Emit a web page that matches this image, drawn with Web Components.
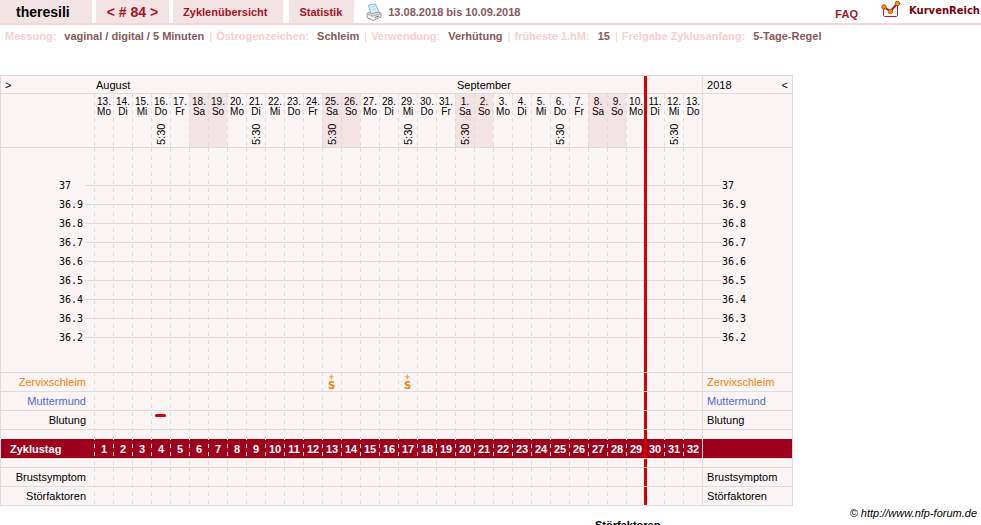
<!DOCTYPE html>
<html lang="de">
<head>
<meta charset="utf-8">
<title>theresili - Zyklus 84</title>
<style>
  html {
    overflow: hidden;
  }
  body {
    margin: 0;
    background: #fff;
    color: #000;
    font: 11px/14px "Liberation Sans", Arial, sans-serif;
  }
</style>
</head>
<body>
<nfp-header>
  <nfp-tab big>theresili</nfp-tab>
  <nfp-tab big href="#84">&lt; # 84 &gt;</nfp-tab>
  <nfp-tab href="#zyklen">Zyklenübersicht</nfp-tab>
  <nfp-tab href="#statistik">Statistik</nfp-tab>
  <span slot="range">13.08.2018 bis 10.09.2018</span>
</nfp-header>
<profile-bar>
  <profile-item label="Messung:">vaginal / digital / 5 Minuten</profile-item>
  <profile-item label="Östrogenzeichen:">Schleim</profile-item>
  <profile-item label="Verwendung:">Verhütung</profile-item>
  <profile-item label="früheste 1.hM:">15</profile-item>
  <profile-item label="Freigabe Zyklusanfang:">5-Tage-Regel</profile-item>
</profile-bar>
<cycle-chart start="2018-08-13" days="32" current="29" measured="4,9,13,17,20,25,31" mucus="13,17" bleeding="4"></cycle-chart>
<nfp-footer>
  <span slot="copyright">© http://www.nfp-forum.de</span>
  Störfaktoren
</nfp-footer>

<script>
class NfpHeader extends HTMLElement {
  constructor() {
    super()
    this.attachShadow({ mode: 'open' }).innerHTML = `
      <style>
        :host {
          display: block;
          border-bottom: 2px solid #f3d7da;
        }
        header, nav, .range, .brand {
          display: flex;
        }
        nav {
          gap: 4px;
        }
        .range {
          align-items: center;
          gap: 6px;
          padding-left: 12px;
          color: #85595b;
          font-weight: bold;
        }
        .right {
          display: flex;
          gap: 22px;
          margin-left: auto;
          padding-right: 1px;
        }
        a {
          color: #9c1828;
          font-weight: bold;
          text-decoration: none;
        }
        .faq {
          padding-top: 7px;
        }
        .brand {
          gap: 7px;
          color: #800010;
          font: bold 10px/14px "DejaVu Sans", Verdana, sans-serif;
        }
        .brand span {
          padding-top: 4px;
        }
      </style>
      <header>
        <nav><slot></slot></nav>
        <div class="range">
          <svg width="16" height="18" viewBox="0 0 16 18" aria-hidden="true">
            <path d="M2.500 2l7-1 3.500 8-8 2z" fill="#dcf0fd" stroke="#8db6d6"/>
            <path d="M5 4l4.500-.8M6 6.500l4.500-.8" stroke="#a5d0ec"/>
            <path d="M1 10.500l3-1.500 1 2 7-2 3 1v4l-8 3.500-6-3z" fill="#e2e4e6" stroke="#999da3"/>
            <path d="M1.500 11l5.500 2 7.500-2.500" fill="none" stroke="#a9adb2"/>
            <path d="M2 13.500l5 2 7-3" fill="none" stroke="#fff"/>
            <path d="M9 14.500l4-1.500" stroke="#6b7076"/>
          </svg>
          <slot name="range"></slot>
        </div>
        <div class="right">
          <a class="faq" href="#faq">FAQ</a>
          <a class="brand" href="#start">
            <svg width="22" height="22" viewBox="0 0 22 22" aria-hidden="true">
              <path d="M0 12.500h22M8.500 3v16M15.500 3v16" stroke="#f0f0f0" fill="none"/>
              <path d="M3.500 8v7.500l1 1h12l1-1V4" fill="none" stroke="#b01850"/>
              <path d="M4 7l6.500 4.500L17.500 3" fill="none" stroke="#a01848" stroke-width="2"/>
              <g fill="#ff9200" stroke="#c04a14">
                <circle cx="4" cy="7" r="2.200"/>
                <circle cx="10.500" cy="11.500" r="2.200"/>
                <circle cx="17.500" cy="3.500" r="2.200"/>
              </g>
            </svg>
            <span>KurvenReich</span>
          </a>
        </div>
      </header>
    `
  }
}

class NfpTab extends HTMLElement {
  connectedCallback() {
    if (this.shadowRoot) return
    const href = this.getAttribute('href')
    this.attachShadow({ mode: 'open' }).innerHTML = `
      <style>
        :host {
          display: block;
          padding: 0 12px 0 10px;
          background: #f4e3e5;
          font-weight: bold;
          line-height: 23px;
          white-space: nowrap;
        }
        :host(:not([big])) {
          padding-right: 16px;
        }
        :host(:last-of-type) {
          margin-left: 2px;
          padding-right: 12px;
        }
        :host([big]) {
          padding: 1px 11px 0;
          font-size: 14px;
          line-height: 22px;
        }
        :host([big]:not([href])) {
          padding: 1px 22px 0 16px;
        }
        a {
          display: block;
          margin-top: 1px;
          color: #a51324;
          line-height: 22px;
          text-decoration: none;
        }
        :host([big]) a {
          margin: 0;
        }
      </style>
      ${href ? `<a href="${href}"><slot></slot></a>` : '<slot></slot>'}
    `
  }
}

class ProfileBar extends HTMLElement {
  constructor() {
    super()
    this.attachShadow({ mode: 'open' }).innerHTML = `
      <style>
        :host {
          display: flex;
          gap: 4px;
          padding: 4px 5px;
          white-space: nowrap;
        }
      </style>
      <slot></slot>
    `
  }
}

class ProfileItem extends HTMLElement {
  connectedCallback() {
    if (this.shadowRoot) return
    this.attachShadow({ mode: 'open' }).innerHTML = `
      <style>
        :host {
          display: flex;
          color: #85595b;
          font-weight: bold;
        }
        .label {
          margin-right: 8px;
          color: #f5cfd1;
        }
        :host(:not(:last-child))::after {
          content: "|";
          margin-left: 5px;
          color: #f5cfd1;
          font-weight: normal;
        }
      </style>
      <span class="label">${this.getAttribute('label')}</span><slot></slot>
    `
  }
}

const chartStyle = `
  <style>
  :host {
    display: block;
    margin-top: 28px;
    --line: #dcdcdc;
    --marker: #d90000;
    --band: #9e001c;
    --weekend: #f4e3e5;
  }
  table {
    table-layout: fixed;
    width: 793px;
    border: solid var(--line);
    border-width: 1px 1px 0;
    border-spacing: 0;
    background: #faf4f4;
  }
  .label { width: 93px; }
  .day { width: 19px; }
  tr { height: 19px; }
  th, td {
    box-sizing: border-box;
    height: inherit;
    padding: 0;
    border-bottom: 1px solid var(--line);
    font-weight: normal;
    line-height: 14px;
    white-space: nowrap;
  }
  th { text-align: left; }
  td { text-align: center; }
  tbody th:first-child {
    padding-right: 8px;
    text-align: right;
  }
  th:last-child {
    padding-left: 4px;
    border-left: 1px solid var(--line);
  }

  /* dashed day separators: 4px on, 4px off */
  td, .date {
    --dash: var(--line);
    background-image: conic-gradient(from 270deg at 1px 4px, var(--dash) 90deg, transparent 0);
    background-size: 19px 8px;
    background-position: 0 var(--phase, 0);
  }

  .months { height: 18px; }
  .months .month { padding-left: 2px; }
  .months .ends { padding: 0 4px; }
  .ends div {
    display: flex;
    justify-content: space-between;
  }
  .dates { height: 54px; }
  .date {
    padding: 3px 0 0 1px;
    font-size: 10px;
    line-height: 10px;
    text-align: center;
    vertical-align: top;
  }
  .weekend { background-color: var(--weekend); }
  time {
    display: block;
    width: 14px;
    height: 22px;
    margin: 6px auto 0;
    font-size: 11px;
    line-height: 14px;
    writing-mode: vertical-rl;
    transform: rotate(180deg);
  }

  .space th, .space td, .temp th, .temp td { border-bottom: 0; }
  .top { height: 28px; }
  .bottom { height: 26px; }
  .bottom th, .bottom td { border-bottom: 1px solid var(--line); }
  .gap { height: 9px; }
  .rule { height: 10px; }
  .rule th, .rule td {
    border-top: 1px solid var(--line);
    border-bottom: 1px solid var(--line);
  }
  .temp th {
    font: 10px/19px "DejaVu Sans Mono", monospace;
    background: linear-gradient(var(--line), var(--line)) no-repeat 84px 9px / 9px 1px;
  }
  .temp th:first-child {
    padding-left: 58px;
    text-align: left;
  }
  .temp th:last-child {
    padding-left: 19px;
    background-position: 0 9px;
    background-size: 18px 1px;
  }
  .temp td {
    background-image:
      linear-gradient(var(--line), var(--line)),
      conic-gradient(from 270deg at 1px 4px, var(--dash) 90deg, transparent 0);
    background-repeat: no-repeat, repeat;
    background-size: 100% 1px, 19px 8px;
    background-position: 0 9px, 0 var(--phase);
  }
  .band th, .band td {
    --dash: #eee;
    border-bottom: 0;
    background-color: var(--band);
    color: #fff;
    font-weight: bold;
  }
  .band td { padding-left: 1px; }
  .band th:first-child {
    padding-left: 9px;
    text-align: left;
  }

  /* end of the recorded cycle */
  .now { position: relative; }
  .now::before {
    content: "";
    position: absolute;
    top: 0;
    bottom: 0;
    left: -1px;
    width: 3px;
    background: var(--marker);
  }
  thead .now::before { bottom: -1px; }

  .mucus { color: #f58200; }
  .opening { color: #5468cc; }
  .sign {
    display: block;
    font: bold 10px/10px "DejaVu Sans", Verdana, sans-serif;
  }
  .sign sup {
    display: block;
    font: bold 7px/7px "DejaVu Sans", Verdana, sans-serif;
  }
  .blood {
    display: block;
    width: 11px;
    height: 3px;
    margin: 0 auto 9px 4px;
    border-radius: 2px;
    background: var(--marker);
  }
  </style>
`

const weekdays = ['So', 'Mo', 'Di', 'Mi', 'Do', 'Fr', 'Sa']
const monthNames = ['Januar', 'Februar', 'März', 'April', 'Mai', 'Juni', 'Juli', 'August', 'September', 'Oktober', 'November', 'Dezember']

class CycleChart extends HTMLElement {
  connectedCallback() {
    if (!this.shadowRoot) this.attachShadow({ mode: 'open' })
    this.count = Number(this.getAttribute('days'))
    this.current = Number(this.getAttribute('current'))
    this.render()
  }

  list(name) {
    return (this.getAttribute(name) || '').split(',').map(Number)
  }

  dates() {
    const [year, month, day] = this.getAttribute('start').split('-').map(Number)
    return Array.from({ length: this.count }, (_, i) => new Date(year, month - 1, day + i))
  }

  render() {
    // y is counted from the first row under the head, so the dashes run on from row to row
    let y = 0
    const row = (cls, height, head, cells, tail = head) => {
      const phase = (8 - y % 8) % 8
      y += height
      return `<tr class="${cls}" style="--phase: ${phase}px"><th>${head}</th>${cells}<th>${tail}</th></tr>`
    }
    const wide = `<td colspan="${this.current}"></td><td class="now" colspan="${this.count - this.current}"></td>`
    const perDay = content => this.dates().map((_, i) =>
      `<td${i === this.current ? ' class="now"' : ''}>${content(i + 1)}</td>`).join('')
    const mucus = this.list('mucus')
    const bleeding = this.list('bleeding')

    const temps = ['37', '36.9', '36.8', '36.7', '36.6', '36.5', '36.4', '36.3', '36.2']
    const body = [
      row('space top', 28, '', wide),
      ...temps.map(t => row('temp', 19, t, wide)),
      row('space bottom', 26, '', wide),
      row('mucus', 19, 'Zervixschleim', perDay(n => mucus.includes(n) ? '<span class="sign"><sup>+</sup>S</span>' : '')),
      row('opening', 19, 'Muttermund', perDay(() => '')),
      row('', 19, 'Blutung', perDay(n => bleeding.includes(n) ? '<span class="blood"></span>' : '')),
      row('space gap', 9, '', wide),
      row('band', 19, 'Zyklustag', perDay(n => n), ''),
      row('rule', 10, '', wide),
      row('', 19, 'Brustsymptom', perDay(() => '')),
      row('', 19, 'Störfaktoren', perDay(() => '')),
    ]

    this.shadowRoot.innerHTML = `
      ${chartStyle}
      <table>
        <colgroup><col class="label">${'<col class="day">'.repeat(this.count)}<col></colgroup>
        <thead>
          <tr class="months"><th class="ends">&gt;</th>${this.months()}<th class="ends"><div><span>2018</span><span>&lt;</span></div></th></tr>
          <tr class="dates"><th></th>${this.days()}<th></th></tr>
        </thead>
        <tbody>${body.join('')}</tbody>
      </table>
    `
  }

  months() {
    const dates = this.dates()
    const split = dates.findIndex(d => d.getMonth() !== dates[0].getMonth())
    const name = d => monthNames[d.getMonth()]
    return `<th class="month" colspan="${split}">${name(dates[0])}</th>
      <th class="month" colspan="${this.current - split}">${name(dates[split])}</th>
      <th class="now" colspan="${this.count - this.current}"></th>`
  }

  days() {
    const measured = this.list('measured')
    return this.dates().map((date, i) => {
      const weekend = date.getDay() % 6 === 0 ? ' weekend' : ''
      const now = i === this.current ? ' now' : ''
      const time = measured.includes(i + 1) ? '<time>5:30</time>' : ''
      return `<th class="date${weekend}${now}">${date.getDate()}.<br>${weekdays[date.getDay()]}${time}</th>`
    }).join('')
  }
}

class NfpFooter extends HTMLElement {
  constructor() {
    super()
    this.attachShadow({ mode: 'open' }).innerHTML = `
      <style>
        :host {
          display: block;
        }
        .copyright {
          padding-right: 4px;
          font-style: italic;
          line-height: 14px;
          text-align: right;
        }
        .legend {
          display: grid;
          grid-template-columns: 595px 1fr;
          font-weight: bold;
          line-height: 10px;
        }
        .legend div {
          grid-column: 2;
        }
      </style>
      <div class="copyright"><slot name="copyright"></slot></div>
      <div class="legend"><div><slot></slot></div></div>
    `
  }
}

customElements.define('nfp-header', NfpHeader)
customElements.define('nfp-tab', NfpTab)
customElements.define('profile-bar', ProfileBar)
customElements.define('profile-item', ProfileItem)
customElements.define('cycle-chart', CycleChart)
customElements.define('nfp-footer', NfpFooter)
</script>
</body>
</html>
